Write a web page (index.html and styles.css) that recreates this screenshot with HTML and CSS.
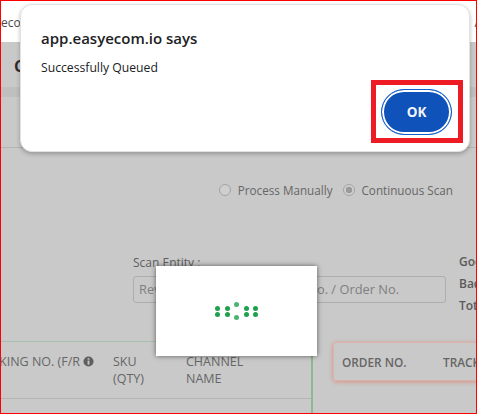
FILE: index.html
```html
<!DOCTYPE html>
<html lang="en">
<head>
<meta charset="utf-8">
<title>Successfully Queued</title>
<link rel="stylesheet" href="styles.css">
</head>
<body>
<div class="page">
  <header class="topbar"><span>Easyeco</span><span class="topbar-right">A</span></header>
  <div class="title-row"><span class="title">Create</span></div>
  <div class="band"></div>
  <div class="tabs"></div>
  <div class="radios">
    <label class="radio-item"><span class="radio"></span>Process Manually</label>
    <label class="radio-item"><span class="radio radio-on"></span>Continuous Scan</label>
  </div>
  <section class="scan-row">
    <div class="scan">
      <div class="scan-label">Scan Entity :</div>
      <div class="scan-input">Reverse AWB No. / Tracking No. / Order No.</div>
    </div>
    <div class="stats">
      <div>Good</div>
      <div>Bad</div>
      <div>Total</div>
    </div>
  </section>
  <section class="tables">
    <div class="table-left">
      <div class="table-head">
        <div class="col col-track"><span class="nowrap">TRACKING NO. (F/R</span>
          <svg class="info" viewBox="0 0 12 12"><circle cx="6" cy="6" r="5.5" fill="#5f5f5f"/><rect x="5" y="5" width="2" height="4.4" fill="#c9c9c9"/><rect x="5" y="2.4" width="2" height="1.6" fill="#c9c9c9"/></svg>
        </div>
        <div class="col col-sku">SKU (QTY)</div>
        <div class="col col-channel">CHANNEL NAME</div>
      </div>
    </div>
    <div class="table-right">
      <span class="col-order">ORDER NO.</span>
      <span>TRACKING</span>
    </div>
  </section>
</div>

<div class="loader">
  <div class="dots">
    <span class="pair"><i></i><i></i></span>
    <span class="pair"><i></i><i></i></span>
    <span class="pair pair-wide"><i></i><i></i></span>
    <span class="pair"><i></i><i></i></span>
    <span class="pair"><i></i><i></i></span>
  </div>
</div>

<div class="dialog">
  <h1 class="dialog-title">app.easyecom.io says</h1>
  <p class="dialog-msg">Successfully Queued</p>
  <div class="dialog-actions">
    <button class="ok">OK</button>
  </div>
</div>
<div class="highlight"></div>
</body>
</html>
```
FILE: styles.css
```css
* { box-sizing: border-box; }
html, body { margin: 0; padding: 0; }
body {
  width: 477px;
  height: 414px;
  overflow: hidden;
  position: relative;
  font-family: "Open Sans", "Noto Sans", sans-serif;
  background: #c9c9c9;
}
.page {
  width: 477px;
  height: 414px;
  border: 1px solid #ff0000;
  overflow: hidden;
  color: #5f6368;
  font-size: 12px;
}
.topbar {
  height: 41px;
  background: #fff;
  display: flex;
  justify-content: space-between;
  align-items: center;
  padding-top: 2px;
  color: #4a4a4a;
  font-size: 12px;
  white-space: nowrap;
}
.topbar span:first-child { margin-left: -25px; }
.topbar-right { margin-right: -6px; }
.title-row {
  height: 45px;
  display: flex;
  align-items: center;
  padding-left: 13px;
  padding-top: 3px;
}
.title { font-size: 16px; font-weight: 700; color: #2c2c2c; }
.band { height: 10px; background: #bfbfbf; }
.tabs { height: 51px; border-bottom: 1px solid #b4b4b4; }
.radios {
  display: flex;
  justify-content: flex-end;
  gap: 10px;
  padding: 34px 23px 0 0;
  height: 55px;
  font-size: 11.7px;
}
.radio-item { display: flex; align-items: center; gap: 7px; height: 16px; color: #666; }
.radio {
  width: 12px;
  height: 12px;
  border-radius: 50%;
  border: 1px solid #a3a3a3;
  background: #cfcfcf;
}
.radio-on { background: radial-gradient(circle, #9a9a9a 0 3px, #cfcfcf 3.6px); }
.scan-row {
  display: flex;
  margin-top: 4px;
  padding-left: 132px;
  height: 134px;
}
.scan { width: 313px; flex: none; padding-top: 48px; }
.scan-label { line-height: 16px; color: #5f5f5f; font-weight: 500; }
.scan-input {
  height: 27px;
  margin-top: 5px;
  border: 1px solid #adadad;
  border-radius: 3px;
  padding: 0 5px;
  line-height: 25px;
  font-size: 12.85px;
  color: #808080;
  white-space: nowrap;
  overflow: hidden;
}
.stats {
  margin-left: 13px;
  padding-top: 44px;
  font-weight: 600;
  color: #5a5a5a;
  line-height: 22px;
}
.tables { display: flex; align-items: flex-start; height: 80px; }
.table-left {
  width: 312px;
  height: 80px;
  flex: none;
  border-top: 1px solid #a9bfae;
  border-right: 2px solid #8db893;
}
.table-head {
  display: flex;
  height: 57px;
  border-bottom: 1px solid #b4b4b4;
  padding-top: 11px;
  line-height: 17px;
  font-size: 12.5px;
  color: #666;
}
.col { flex: none; }
.col-track {
  width: 112px;
  display: flex;
  justify-content: flex-end;
  align-items: flex-start;
  gap: 3px;
  height: 17px;
  padding-right: 19px;
  overflow: hidden;
}
.nowrap { white-space: nowrap; flex: none; }
.info { width: 11px; height: 11px; flex: none; margin-top: 3px; }
.col-sku { width: 73px; padding-right: 20px; }
.col-channel { width: 70px; }
.table-right {
  margin-left: 20px;
  margin-top: 1px;
  width: 160px;
  flex: none;
  height: 39px;
  border: 1px solid #d9b3ab;
  border-right: 0;
  border-radius: 3px 0 0 3px;
  box-shadow: 0 1px 4px #d98f80;
  display: flex;
  align-items: center;
  padding-left: 8px;
  font-size: 11.8px;
  font-weight: 600;
  color: #666;
  white-space: nowrap;
}
.col-order { width: 101px; flex: none; }

.loader {
  position: absolute;
  left: 156px;
  top: 266px;
  width: 161px;
  height: 90px;
  background: #fff;
  box-shadow: 0 0 5px rgba(0, 0, 0, 0.55);
  display: flex;
  align-items: center;
  justify-content: center;
}
.dots { display: flex; gap: 4.5px; align-items: center; }
.pair { display: flex; flex-direction: column; gap: 1px; }
.pair i { width: 5px; height: 5px; border-radius: 50%; background: #1ea04f; display: block; }
.pair-wide { gap: 8px; opacity: 0.8; }

.dialog {
  position: absolute;
  left: 20px;
  top: 4px;
  width: 450px;
  height: 148px;
  background: #fff;
  border: 1px solid #e2e2e2;
  border-radius: 12px;
  box-shadow: 0 2px 4px rgba(0, 0, 0, 0.25);
  padding: 23px 17px 0 20px;
  color: #202124;
}
.dialog-title {
  margin: 0;
  font-size: 15px;
  line-height: 20px;
  font-weight: 600;
}
.dialog-msg {
  margin: 12px 0 0;
  font-size: 12.2px;
  line-height: 16px;
}
.dialog-actions { display: flex; justify-content: flex-end; margin-top: 13px; }
.ok {
  width: 71px;
  height: 46px;
  border-radius: 23px;
  background: #0f52ba;
  border: 1.5px solid #0f5fd0;
  box-shadow: inset 0 0 0 2px #fff;
  color: #f2f5fb;
  font: 700 13.5px "Open Sans", sans-serif;
  padding: 0;
}
.highlight {
  position: absolute;
  left: 371px;
  top: 80px;
  width: 92px;
  height: 63px;
  border: 5px solid #ed1c24;
}
```
